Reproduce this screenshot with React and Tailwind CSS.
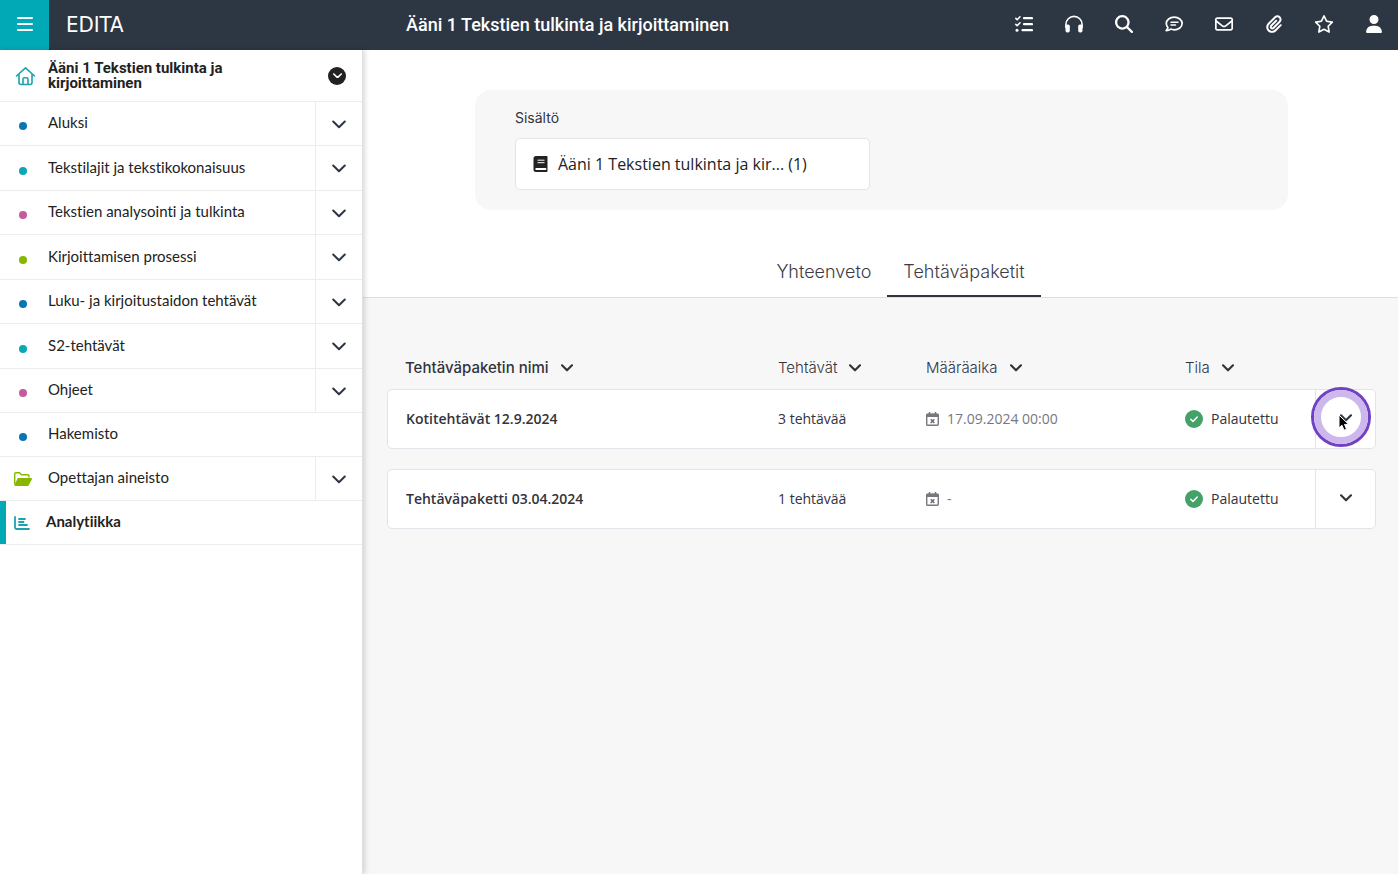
import React, { useState } from "react";
import {
  FaMagnifyingGlass,
  FaPaperclip,
  FaRegEnvelope,
  FaRegStar,
  FaUser,
} from "react-icons/fa6";

const chapters = [
  { name: "Aluksi", dot: "bg-[#0a75b5]" },
  { name: "Tekstilajit ja tekstikokonaisuus", dot: "bg-[#0aa8b4]" },
  { name: "Tekstien analysointi ja tulkinta", dot: "bg-[#c8599b]" },
  { name: "Kirjoittamisen prosessi", dot: "bg-[#86b800]" },
  { name: "Luku- ja kirjoitustaidon tehtävät", dot: "bg-[#0a75b5]" },
  { name: "S2-tehtävät", dot: "bg-[#0aa8b4]" },
  { name: "Ohjeet", dot: "bg-[#c8599b]" },
];

const packages = [
  {
    name: "Kotitehtävät 12.9.2024",
    tasks: "3 tehtävää",
    due: "17.09.2024 00:00",
    status: "Palautettu",
    clicked: true,
  },
  {
    name: "Tehtäväpaketti 03.04.2024",
    tasks: "1 tehtävää",
    due: "-",
    status: "Palautettu",
  },
];

const tools = [
  { label: "Tehtävät", icon: <ChecklistIcon /> },
  { label: "Kuuntele", icon: <HeadphonesIcon /> },
  { label: "Haku", icon: <FaMagnifyingGlass size={18} /> },
  { label: "Keskustelu", icon: <CommentIcon /> },
  { label: "Viestit", icon: <FaRegEnvelope size={18} /> },
  { label: "Liitteet", icon: <FaPaperclip size={18} /> },
  { label: "Suosikit", icon: <FaRegStar size={20} /> },
  { label: "Profiili", icon: <FaUser size={18} /> },
];

const App = () => {
  return (
    <div className="flex min-h-screen flex-col bg-white text-[#222] font-['Open_Sans',sans-serif]">
      <TopBar />
      <div className="flex flex-1">
        <Sidebar />
        <main className="flex min-w-0 flex-1 flex-col">
          <Filters />
          <Tabs />
          <section className="flex-1 bg-[#f7f7f7] pt-[58px] pr-[22px] pl-6">
            <PackageTable />
          </section>
        </main>
      </div>
    </div>
  );
};

export default App;

const TopBar = () => {
  return (
    <header className="flex h-[50px] items-center bg-[#2d3643] text-white">
      <button
        aria-label="Valikko"
        className="flex h-full w-[49px] items-center justify-center bg-[#00a9b5] pb-[2px]"
      >
        <BarsIcon />
      </button>
      <a
        href="#"
        className="w-[357px] pl-[17px] text-[22px] leading-[50px] font-['Liberation_Sans_Narrow','DejaVu_Sans_Condensed',sans-serif]"
      >
        EDITA
      </a>
      <h1 className="flex-1 text-[18px] leading-6 font-medium font-['Roboto',sans-serif]">
        Ääni 1 Tekstien tulkinta ja kirjoittaminen
      </h1>
      <nav className="-mr-px flex h-full">
        {tools.map((t) => (
          <button
            key={t.label}
            aria-label={t.label}
            className="flex w-[50px] items-center justify-center pb-[2px]"
          >
            {t.icon}
          </button>
        ))}
      </nav>
    </header>
  );
};

const Sidebar = () => {
  return (
    <aside className="z-10 w-[363px] shrink-0 border-r border-[#e0e0e0] bg-white text-[15px] shadow-[2px_0_5px_rgba(0,0,0,0.15)] font-['Lato',sans-serif] [font-variant-ligatures:none]">
      <div className="flex h-[52px] items-center border-b border-[#ececec] pr-4 pl-[15px]">
        <HomeIcon />
        <h2 className="ml-3 flex-1 pr-16 text-[15px] leading-[15px] font-bold font-['Roboto',sans-serif]">
          Ääni 1 Tekstien tulkinta ja kirjoittaminen
        </h2>
        <button
          aria-label="Vaihda sisältöä"
          className="flex size-[18px] items-center justify-center rounded-full bg-[#222] text-white"
        >
          <Chevron className="w-[9px]" thick />
        </button>
      </div>
      <ul>
        {chapters.map((c) => (
          <li
            key={c.name}
            className="flex h-11 border-b border-[#ececec] even:h-[45px]"
          >
            <a href="#" className="flex flex-1 items-center pl-[19px]">
              <span className={`mt-[5px] size-2 rounded-full ${c.dot}`} />
              <span className="ml-[21px] pb-[2px]">{c.name}</span>
            </a>
            <ExpandButton name={c.name} />
          </li>
        ))}
      </ul>
      <ul>
        <li className="flex h-11 border-b border-[#ececec]">
          <a href="#" className="flex flex-1 items-center pl-[19px]">
            <span className="mt-[5px] size-2 rounded-full bg-[#0a75b5]" />
            <span className="ml-[21px] pb-[2px]">Hakemisto</span>
          </a>
        </li>
        <li className="flex h-11 border-b border-[#ececec]">
          <a href="#" className="flex flex-1 items-center pl-[14px]">
            <FolderIcon />
            <span className="ml-4 pb-[2px]">Opettajan aineisto</span>
          </a>
          <ExpandButton name="Opettajan aineisto" />
        </li>
        <li className="flex h-11 border-b border-[#ececec]">
          <a
            href="#"
            aria-current="page"
            className="flex flex-1 items-center border-l-6 border-[#00a9b5] pl-2 font-bold"
          >
            <ChartIcon />
            <span className="ml-4 pb-[2px]">Analytiikka</span>
          </a>
        </li>
      </ul>
    </aside>
  );
};

const ExpandButton = ({ name }) => {
  return (
    <button
      aria-label={`Avaa ${name}`}
      className="flex w-[47px] items-center justify-center border-l border-[#ececec] pt-px text-[#2d3643]"
    >
      <Chevron className="w-[14px]" />
    </button>
  );
};

const Filters = () => {
  return (
    <section className="pt-10 pr-6 pl-[26px]">
      <div className="mx-auto w-full max-w-[813px] rounded-2xl bg-[#f7f7f7] px-10 py-5">
        <label
          htmlFor="content"
          className="mb-3 block text-[14px] leading-4 text-[#33333d] font-['Inter',sans-serif]"
        >
          Sisältö
        </label>
        <button
          id="content"
          className="flex h-[52px] w-full max-w-[355px] items-center gap-[10px] rounded-[5px] border border-[#e3e3e9] bg-white pl-[17px] text-[16px]"
        >
          <BookIcon />
          Ääni 1 Tekstien tulkinta ja kir... (1)
        </button>
      </div>
    </section>
  );
};

const Tabs = () => {
  const [tab, setTab] = useState("packages");
  const tabClass = (id) =>
    tab === id
      ? "h-[52px] border-b-2 border-[#33333d] px-4 pt-[2px]"
      : "h-[52px] border-b-2 border-transparent px-4 pt-[2px]";
  return (
    <div
      role="tablist"
      className="mt-[35px] flex justify-center border-b border-[#dfdfe3] pl-10 text-[18px] text-[#3c3c46] font-['Inter',sans-serif] font-light"
    >
      <button
        role="tab"
        aria-selected={tab === "summary"}
        onClick={() => setTab("summary")}
        className={tabClass("summary")}
      >
        Yhteenveto
      </button>
      <button
        role="tab"
        aria-selected={tab === "packages"}
        onClick={() => setTab("packages")}
        className={tabClass("packages")}
      >
        Tehtäväpaketit
      </button>
    </div>
  );
};

const rowGrid =
  "grid grid-cols-[minmax(0,1fr)_148px_259px_130px_60px] border";

const PackageTable = () => {
  return (
    <table className="block w-full text-left text-[14px] text-[#33333d]">
      <thead className="mb-[9px] block">
        <tr className={`${rowGrid} border-transparent`}>
          <SortHeader className="pl-[17px] font-medium">
            Tehtäväpaketin nimi
          </SortHeader>
          <SortHeader className="font-light">Tehtävät</SortHeader>
          <SortHeader className="font-light">Määräaika</SortHeader>
          <SortHeader className="font-light">Tila</SortHeader>
        </tr>
      </thead>
      <tbody className="grid gap-5">
        {packages.map((p) => (
          <tr
            key={p.name}
            className={`${rowGrid} h-[60px] items-center rounded-[5px] border-[#e3e3e9] bg-white`}
          >
            <td className="pb-px pl-[18px] font-semibold">{p.name}</td>
            <td className="pb-px">{p.tasks}</td>
            <td className="flex items-center gap-2 pb-px text-[#77777f]">
              <CalendarIcon />
              {p.due}
            </td>
            <td className="flex items-center gap-2 pb-px">
              <CheckIcon />
              {p.status}
            </td>
            <td className="h-full border-l border-[#e3e3e9]">
              <button
                aria-label={`Avaa ${p.name}`}
                className="relative flex h-full w-full items-center justify-center pb-[2px]"
              >
                <Chevron className="w-3" thick />
                {p.clicked && <ClickMarker />}
              </button>
            </td>
          </tr>
        ))}
      </tbody>
    </table>
  );
};

const SortHeader = ({ children, className }) => {
  return (
    <th className={`font-['Inter',sans-serif] ${className}`}>
      <button className="flex items-center gap-3 text-[15px] leading-[22px]">
        {children}
        <Chevron className="w-3" thick />
      </button>
    </th>
  );
};

// highlight ring with the mouse pointer in it
const ClickMarker = () => {
  return (
    <span className="absolute -top-[3px] -left-[5px] size-[60px] rounded-full border-3 border-[#7140c4] bg-transparent">
      <span className="block size-full rounded-full border-7 border-[#cdb8ee]" />
      <svg
        viewBox="0 0 12 18"
        className="absolute top-[24px] left-[24px] w-3"
      >
        <path
          d="M1 1v13l3-2.800 2 5 2.500-1-2-4.800h4.200z"
          fill="#000"
          stroke="#fff"
          strokeWidth="1"
        />
      </svg>
    </span>
  );
};

const Chevron = ({ className, thick }) => {
  return (
    <svg viewBox="0 0 14 9" fill="none" className={className}>
      <path
        d="M1.200 1.500 7 7.300l5.800-5.800"
        stroke="currentColor"
        strokeWidth={thick ? 2.500 : 2}
        strokeLinecap="round"
        strokeLinejoin="round"
      />
    </svg>
  );
};

const BarsIcon = () => {
  return (
    <svg width="16" height="16" viewBox="0 0 16 16">
      <path
        d="M1 2h14M1 8h14M1 14h14"
        stroke="currentColor"
        strokeWidth="2"
        strokeLinecap="round"
      />
    </svg>
  );
};

function ChecklistIcon() {
  return (
    <svg width="18" height="16" viewBox="0 0 18 16" fill="none">
      <path
        d="M9 2.200h8M9 8.200h8M7.500 14.200H17"
        stroke="currentColor"
        strokeWidth="2.200"
        strokeLinecap="round"
      />
      <path
        d="m.8 2.400 1.400 1.400L5 .8M.8 8.400l1.400 1.400L5 6.800"
        stroke="currentColor"
        strokeWidth="1.500"
        strokeLinecap="round"
        strokeLinejoin="round"
      />
      <circle cx="2" cy="14.200" r="1.500" fill="currentColor" />
    </svg>
  );
}

function HeadphonesIcon() {
  return (
    <svg width="18" height="18" viewBox="0 0 18 18" fill="none">
      <path
        d="M.9 12.500V9.500a8.100 8.100 0 0 1 16.200 0v3"
        stroke="currentColor"
        strokeWidth="1.600"
        strokeLinecap="round"
      />
      <rect x="0.500" y="9.500" width="4.300" height="8" rx="1.700" fill="currentColor" />
      <rect x="13.200" y="9.500" width="4.300" height="8" rx="1.700" fill="currentColor" />
    </svg>
  );
}

function CommentIcon() {
  return (
    <svg width="18" height="18" viewBox="0 0 18 18" fill="none">
      <path
        d="M9.200 2.200c4.400 0 7.900 2.800 7.900 6.300s-3.500 6.300-7.900 6.300c-1.300 0-2.500-.2-3.500-.7-1.200.9-2.700 1.500-4.500 1.600.9-.9 1.500-2 1.700-3.200-1-1.100-1.600-2.500-1.600-4 0-3.500 3.500-6.300 7.900-6.300z"
        stroke="currentColor"
        strokeWidth="1.700"
        strokeLinejoin="round"
      />
      <path
        d="M6 7.200h7M6 10h4.500"
        stroke="currentColor"
        strokeWidth="1.500"
        strokeLinecap="round"
      />
    </svg>
  );
}

const BookIcon = () => {
  return (
    <svg width="15" height="16" viewBox="0 0 15 16">
      <path
        d="M3 0h10.500c.6 0 1 .4 1 1v14c0 .6-.4 1-1 1H3a2.500 2.500 0 0 1-2.500-2.500v-11A2.500 2.500 0 0 1 3 0z"
        fill="#222"
      />
      <path d="M4.500 4.200h7M4.500 6.700h7" stroke="#fff" strokeWidth="1" />
      <path
        d="M3.200 13h9.300"
        stroke="#fff"
        strokeWidth="1.800"
        strokeLinecap="round"
      />
    </svg>
  );
};

const HomeIcon = () => {
  return (
    <svg width="21" height="20" viewBox="0 0 21 20" fill="none">
      <path
        d="M1.500 10 10.500 1.800 19.500 10M4 8v8.500a2 2 0 0 0 2 2h9a2 2 0 0 0 2-2V8M8 18.300V13a1.300 1.300 0 0 1 1.300-1.300h2.400A1.300 1.300 0 0 1 13 13v5.300"
        stroke="#1ba3ae"
        strokeWidth="1.600"
        strokeLinecap="round"
        strokeLinejoin="round"
      />
    </svg>
  );
};

const FolderIcon = () => {
  return (
    <svg width="18" height="14" viewBox="0 0 18 14">
      <path
        d="M.7 12.500V1.800C.7 1.200 1.200.7 1.800.7h3.700l2 2h6.300c.7 0 1.200.5 1.200 1.200v1.600"
        fill="none"
        stroke="#86b800"
        strokeWidth="1.400"
      />
      <path
        d="M4.500 6h12.600c.7 0 1.100.7.8 1.300l-3 5.800c-.3.600-.8.900-1.400.9H1.300c-.6 0-1-.6-.7-1.200l2.800-6c.2-.5.600-.8 1.100-.8z"
        fill="#86b800"
      />
    </svg>
  );
};

const ChartIcon = () => {
  return (
    <svg width="16" height="14" viewBox="0 0 16 14" fill="none">
      <path
        d="M1 1v10.500C1 12.300 1.700 13 2.500 13H15M5 3h6M5 6h4.500M5 9h8"
        stroke="#1ba3ae"
        strokeWidth="1.800"
        strokeLinecap="round"
      />
    </svg>
  );
};

const CalendarIcon = () => {
  return (
    <svg width="13" height="14" viewBox="0 0 13 14" fill="none">
      <path
        d="M3.500 0v3M9.500 0v3"
        stroke="#77777f"
        strokeWidth="1.500"
      />
      <path d="M0 5V3a1.500 1.500 0 0 1 1.500-1.500h10A1.500 1.500 0 0 1 13 3v2z" fill="#77777f" />
      <rect
        x=".7"
        y="2.500"
        width="11.600"
        height="10.800"
        rx="1"
        stroke="#77777f"
        strokeWidth="1.400"
      />
      <path d="m4.700 7.300 3.600 3.600m0-3.600-3.600 3.600" stroke="#66666f" strokeWidth="1.400" />
    </svg>
  );
};

const CheckIcon = () => {
  return (
    <svg width="18" height="18" viewBox="0 0 18 18" fill="none">
      <circle cx="9" cy="9" r="9" fill="#44a168" />
      <path
        d="m5.800 9.200 2.200 2.200 4.200-4.400"
        stroke="#fff"
        strokeWidth="1.500"
        strokeLinecap="round"
        strokeLinejoin="round"
      />
    </svg>
  );
};
